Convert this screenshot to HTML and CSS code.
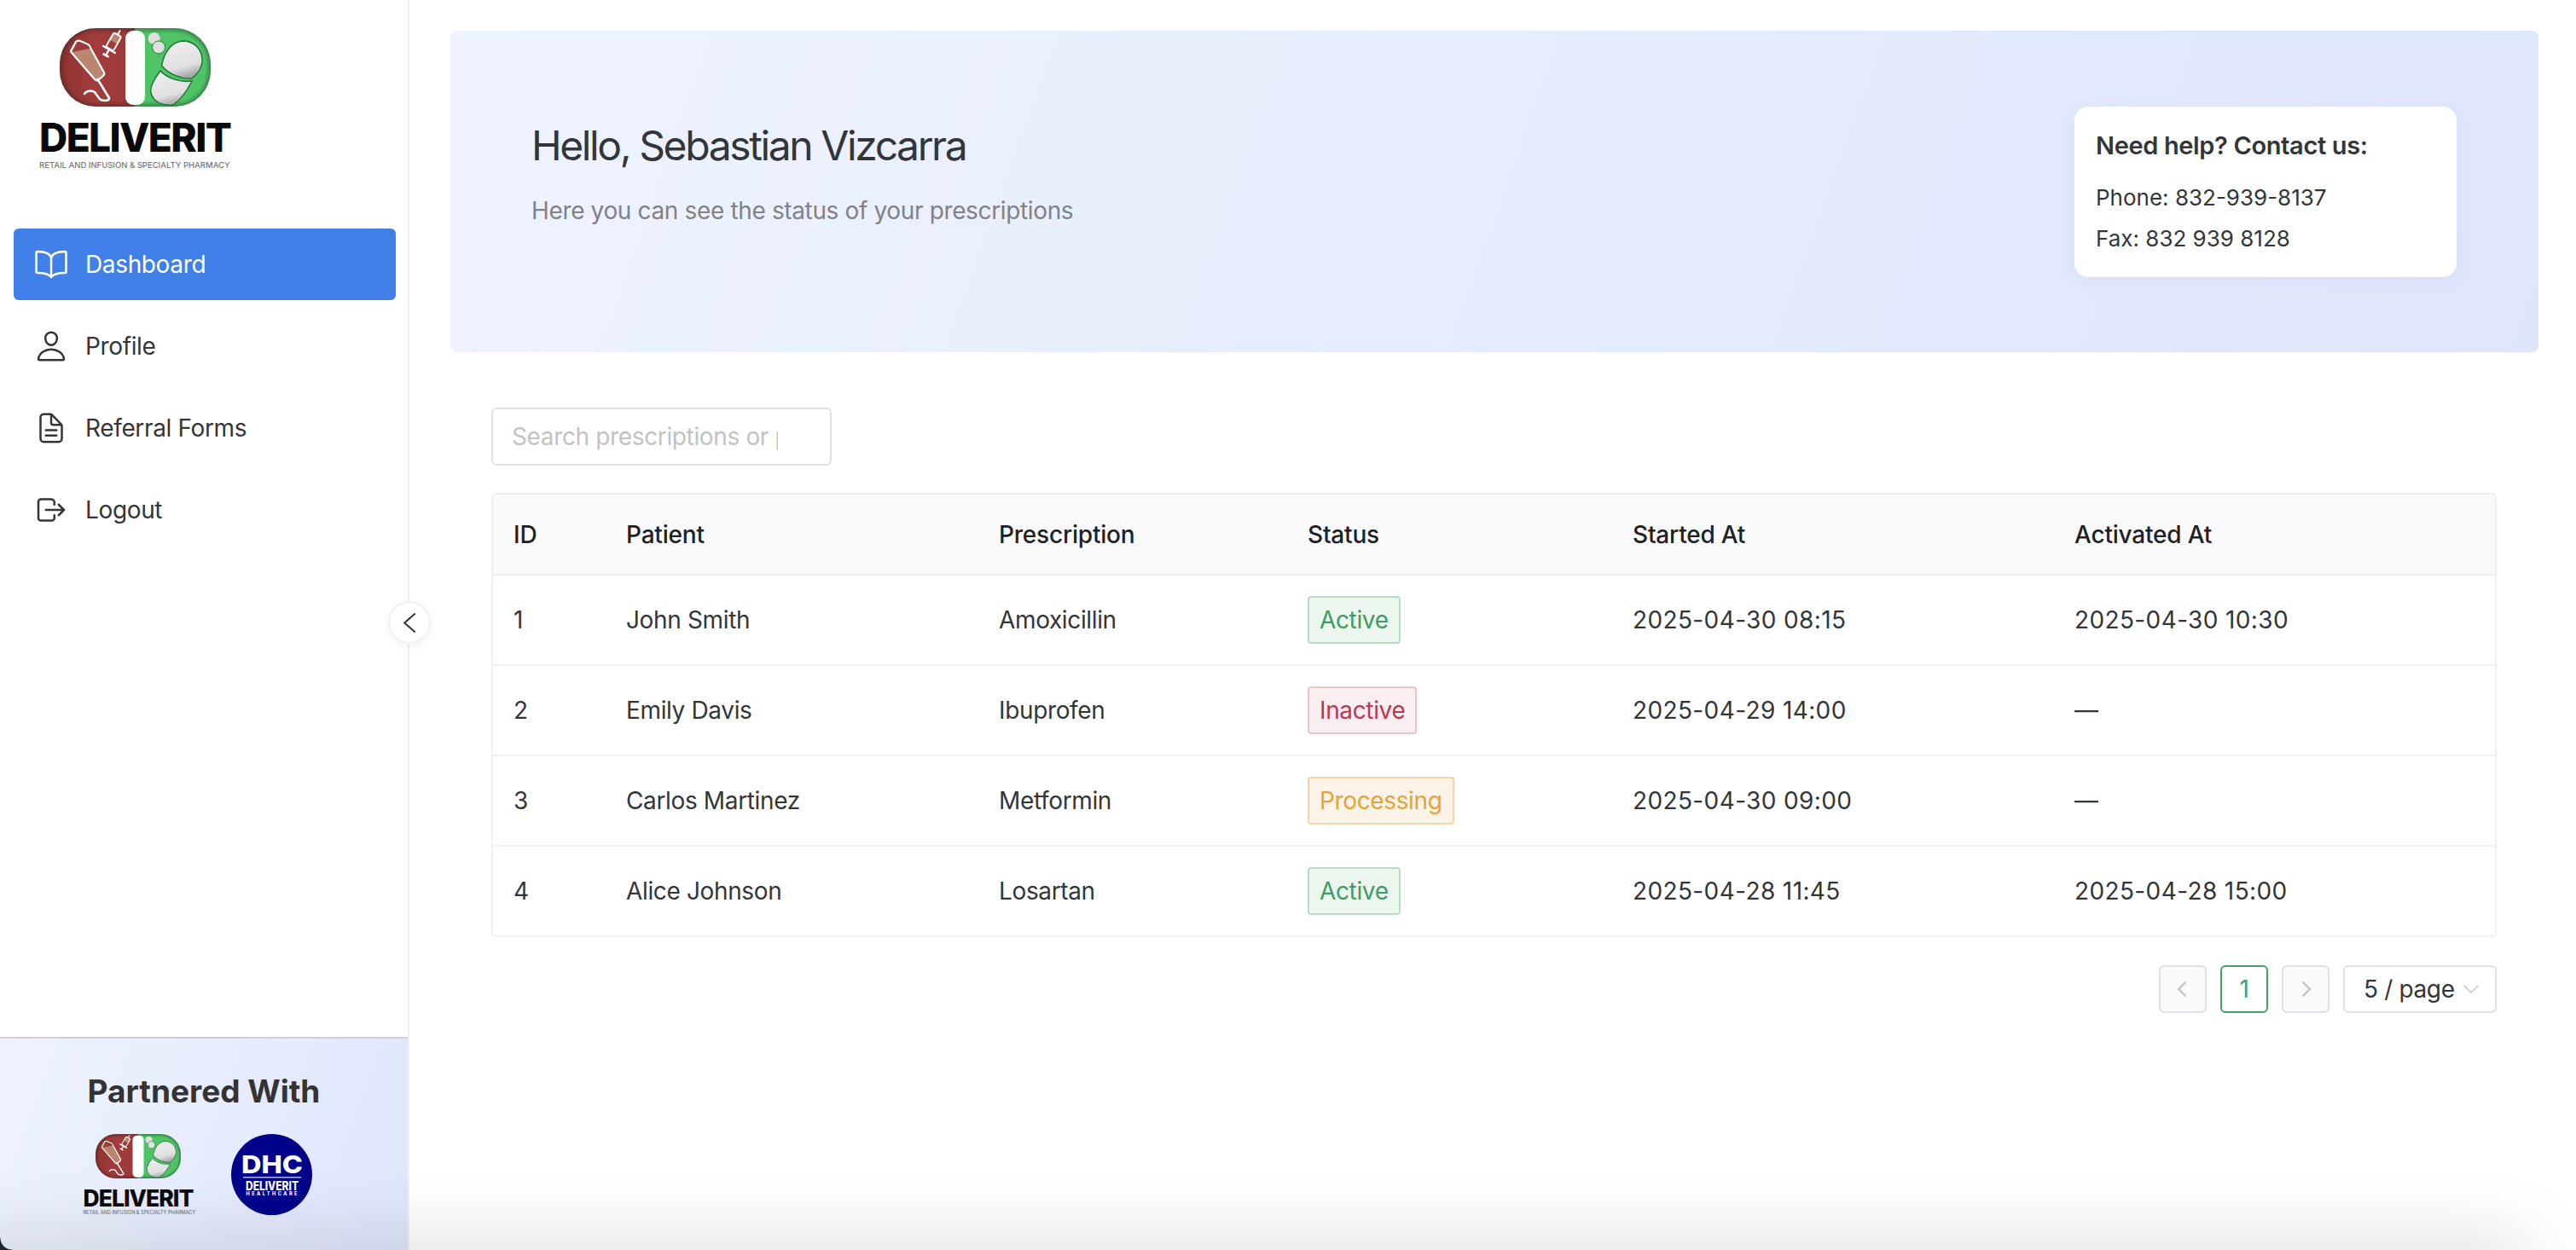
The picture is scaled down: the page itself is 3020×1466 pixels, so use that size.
FILE: index.html
```html
<!DOCTYPE html>
<html lang="en">
<head>
<meta charset="utf-8">
<title>Deliverit Dashboard</title>
<link rel="stylesheet" href="styles.css">
</head>
<body>
<svg class="defs" width="0" height="0" aria-hidden="true">
  <defs>
    <linearGradient id="redFill" x1="0" y1="0" x2="1" y2="0">
      <stop offset="0" stop-color="#8f3232"/><stop offset="0.5" stop-color="#a33c3c"/><stop offset="1" stop-color="#9a3838"/>
    </linearGradient>
    <linearGradient id="capsFill" x1="0.2" y1="0" x2="0.5" y2="1">
      <stop offset="0" stop-color="#efefef"/><stop offset="0.72" stop-color="#e0e0e0"/><stop offset="1" stop-color="#a4a4a4"/>
    </linearGradient>
    <clipPath id="pillClip"><rect width="177" height="92" rx="42"/></clipPath>
    <filter id="soft" x="-20%" y="-20%" width="140%" height="140%"><feGaussianBlur stdDeviation="2.2"/></filter>
    <symbol id="pill" viewBox="0 0 177 92">
      <g clip-path="url(#pillClip)">
        <rect width="88.5" height="92" fill="url(#redFill)"/>
        <rect x="88.5" width="88.5" height="92" fill="#4fc467"/>
        <rect x="0.5" y="0.5" width="176" height="91" rx="41.5" fill="none" stroke="#1d2a20" stroke-opacity="0.55" stroke-width="4" filter="url(#soft)"/>
      </g>
      <rect x="77" y="3" width="23" height="87" rx="9" fill="#fff"/>
      <path d="M13 27L19 16Q21 14 24 15L33 19Q35 20 36 23L52 52Q53 54 51 56L45 61Q43 62 41 60L15 30Q13 28 13 27z" fill="#bb8570" stroke="#fff" stroke-width="2.2" stroke-linejoin="round"/>
      <path d="M14.5 28L20 17Q21.500 15.500 24 16.300L32.500 20Q34.500 21 35.500 24z" fill="#9c3b3b"/>
      <path d="M44 60L47 64L58 82Q58 85 53 85Q48 85 46 82L41 75Q38 73 33 74Q30 75 29 77" fill="none" stroke="#fff" stroke-width="2.6" stroke-linecap="round" stroke-linejoin="round"/>
      <g transform="rotate(30 62 18)">
        <path d="M62 0v6" stroke="#fff" stroke-width="2"/>
        <rect x="57" y="6" width="10" height="19" rx="2.500" fill="#bb8570" stroke="#fff" stroke-width="2"/>
        <rect x="58" y="16" width="8" height="8" fill="#9c3b3b"/>
        <path d="M53 26h18M62 26v7M58 34h8" stroke="#fff" stroke-width="2.400"/>
      </g>
      <circle cx="110.700" cy="12" r="7" fill="#dedede"/>
      <circle cx="116" cy="22.500" r="7.500" fill="#e0e0e0" stroke="#1f7a35" stroke-width="1"/>
      <path d="M119.500 44C122 30 130 15 146 15C158 16 168 25 167 40C166 48 160 55 155 59C142 60 128 54 119.500 44z" fill="url(#capsFill)" stroke="#1c7332" stroke-width="1.400"/>
      <path d="M118 50C126 59 142 64 155 62C150 72 142 84 133 90C122 91 110 88 107 76C105 68 112 58 118 50z" fill="url(#capsFill)" stroke="#1c7332" stroke-width="1.400"/>
    </symbol>
  </defs>
</svg>

<aside class="sidebar">
  <div class="brand">
    <svg class="brand-pill"><use href="#pill"/></svg>
    <div class="brand-name">DELIVERIT</div>
    <div class="brand-sub">RETAIL AND INFUSION &amp; SPECIALTY PHARMACY</div>
  </div>

  <nav class="menu">
    <a class="menu-item active">
      <svg class="menu-icon" viewBox="0 0 512 512"><path d="M256 160c16-63.16 76.43-95.41 208-96a15.94 15.94 0 0 1 16 16v288a16 16 0 0 1-16 16c-128 0-177.45 25.81-208 64c-30.37-38-80-64-208-64c-9.88 0-16-8.05-16-17.93V80a15.94 15.94 0 0 1 16-16c131.57.59 192 32.84 208 96z"/><path d="M256 160v288"/></svg>
      <span>Dashboard</span>
    </a>
    <a class="menu-item">
      <svg class="menu-icon" viewBox="0 0 512 512"><path d="M344 144c-3.92 52.87-44 96-88 96s-84.15-43.12-88-96c-4-55 35-96 88-96s92 42 88 96z"/><path d="M256 304c-87 0-175.3 48-191.64 138.6C62.39 453.52 68.57 464 80 464h352c11.44 0 17.62-10.48 15.65-21.4C431.3 352 343 304 256 304z"/></svg>
      <span>Profile</span>
    </a>
    <a class="menu-item">
      <svg class="menu-icon" viewBox="0 0 512 512"><path d="M416 221.25V416a48 48 0 0 1-48 48H144a48 48 0 0 1-48-48V96a48 48 0 0 1 48-48h98.75a32 32 0 0 1 22.62 9.37l141.26 141.26a32 32 0 0 1 9.37 22.62z"/><path d="M256 56v120a32 32 0 0 0 32 32h120"/><path d="M176 288h160"/><path d="M176 368h160"/></svg>
      <span>Referral Forms</span>
    </a>
    <a class="menu-item">
      <svg class="menu-icon" viewBox="0 0 512 512"><path d="M304 336v40a40 40 0 0 1-40 40H104a40 40 0 0 1-40-40V136a40 40 0 0 1 40-40h152c22.09 0 48 17.91 48 40v40"/><path d="M368 336l80-80l-80-80"/><path d="M176 256h256"/></svg>
      <span>Logout</span>
    </a>
  </nav>

  <button class="collapse" aria-label="Collapse sidebar">
    <svg viewBox="0 0 24 24"><path d="M18 1.500L6 12l12 10.500"/></svg>
  </button>

  <section class="partner">
    <h3 class="partner-title">Partnered With</h3>
    <div class="partner-logos">
      <div class="mini-brand">
        <svg class="mini-pill"><use href="#pill"/></svg>
        <div class="mini-name">DELIVERIT</div>
        <div class="mini-sub">RETAIL AND INFUSION &amp; SPECIALTY PHARMACY</div>
      </div>
      <svg class="dhc" viewBox="0 0 95 95">
        <circle cx="47.500" cy="47.500" r="47.500" fill="#00008b"/>
        <text class="dhc-main" x="12" y="46" textLength="72" lengthAdjust="spacingAndGlyphs">DHC</text>
        <rect x="14" y="50" width="68" height="1.600" fill="#a9a9e0"/>
        <text class="dhc-name" x="17" y="66" textLength="62" lengthAdjust="spacingAndGlyphs">DELIVERIT</text>
        <text class="dhc-sub" x="17.500" y="72" textLength="60" lengthAdjust="spacing">HEALTHCARE</text>
      </svg>
    </div>
  </section>
</aside>

<main class="main">
  <header class="hero">
    <div class="hero-text">
      <h1 class="hero-title">Hello, Sebastian Vizcarra</h1>
      <p class="hero-sub">Here you can see the status of your prescriptions</p>
    </div>
    <div class="help-card">
      <h4 class="help-title">Need help? Contact us:</h4>
      <p class="help-line">Phone: 832-939-8137</p>
      <p class="help-line">Fax: 832 939 8128</p>
    </div>
  </header>

  <section class="content">
    <input class="search" type="text" placeholder="Search prescriptions or patients">

    <div class="table-wrap">
      <table class="table">
        <colgroup>
          <col class="c-id"><col class="c-patient"><col class="c-rx"><col class="c-status"><col class="c-start"><col>
        </colgroup>
        <thead>
          <tr><th>ID</th><th>Patient</th><th>Prescription</th><th>Status</th><th>Started At</th><th>Activated At</th></tr>
        </thead>
        <tbody>
          <tr><td>1</td><td>John Smith</td><td>Amoxicillin</td><td><span class="tag tag-green">Active</span></td><td class="num">2025-04-30 08:15</td><td class="num">2025-04-30 10:30</td></tr>
          <tr><td>2</td><td>Emily Davis</td><td>Ibuprofen</td><td><span class="tag tag-red">Inactive</span></td><td class="num">2025-04-29 14:00</td><td>—</td></tr>
          <tr><td>3</td><td>Carlos Martinez</td><td>Metformin</td><td><span class="tag tag-orange">Processing</span></td><td class="num">2025-04-30 09:00</td><td>—</td></tr>
          <tr><td>4</td><td>Alice Johnson</td><td>Losartan</td><td><span class="tag tag-green">Active</span></td><td class="num">2025-04-28 11:45</td><td class="num">2025-04-28 15:00</td></tr>
        </tbody>
      </table>
    </div>

    <div class="pagination">
      <span class="page disabled"><svg viewBox="0 0 24 24"><path d="M15 4.500L7.500 12l7.500 7.500"/></svg></span>
      <span class="page current">1</span>
      <span class="page disabled"><svg viewBox="0 0 24 24"><path d="M9 4.500l7.500 7.500L9 19.500"/></svg></span>
      <span class="page-size">5 / page<svg viewBox="0 0 24 24"><path d="M2 7l10 10L22 7"/></svg></span>
    </div>
  </section>
</main>

<div class="bottom-shadow"></div>
<div class="window-corner"></div>
</body>
</html>
```

FILE: styles.css
```css
* { box-sizing: border-box; }

html, body {
  margin: 0;
  height: 100%;
}

body {
  position: relative;
  display: flex;
  overflow: hidden;
  background: #fff;
  color: #333639;
  font-family: Inter, "Liberation Sans", sans-serif;
  font-size: 28px;
  letter-spacing: -0.36px;
}

.defs { position: absolute; }

/* Sidebar */
.sidebar {
  position: relative;
  display: flex;
  flex-direction: column;
  flex: 0 0 480px;
  height: 100vh;
  border-right: 2px solid #efeff5;
  background: #fff;
}

.brand {
  height: 268px;
  padding: 33px 0 0 46px;
}

.brand-pill {
  display: block;
  width: 177px;
  height: 92px;
  margin-left: 24px;
}

.brand-name {
  margin-top: 13px;
  color: #0a0a0a;
  font-size: 46px;
  font-weight: 800;
  line-height: 46px;
  letter-spacing: -1.6px;
}

.brand-sub {
  margin-top: 4px;
  color: #777;
  font-size: 9.5px;
  font-weight: 500;
  line-height: 12px;
  letter-spacing: 0;
  white-space: nowrap;
}

.menu {
  display: flex;
  flex-direction: column;
  flex: 1;
  gap: 12px;
  padding: 0 14px 0 16px;
}

.menu-item {
  display: flex;
  align-items: center;
  height: 84px;
  padding-left: 24px;
  border-radius: 6px;
  color: #333639;
}

.menu-item.active {
  background: #4080e8;
  color: #fff;
}

.menu-icon {
  flex: none;
  width: 40px;
  height: 40px;
  margin-right: 20px;
  fill: none;
  stroke: currentColor;
  stroke-width: 32;
  stroke-linecap: round;
  stroke-linejoin: round;
}

.collapse {
  position: absolute;
  top: 705px;
  right: -27px;
  z-index: 2;
  display: flex;
  align-items: center;
  justify-content: center;
  width: 50px;
  height: 50px;
  padding: 0;
  border: 2px solid #f0f0f5;
  border-radius: 50%;
  background: #fff;
  box-shadow: 0 4px 12px rgba(0, 0, 0, 0.05);
}

.collapse svg {
  width: 25px;
  height: 25px;
  fill: none;
  stroke: #333639;
  stroke-width: 2;
}

.partner {
  flex: 0 0 250px;
  border-top: 2px solid #cfcfd2;
  background: linear-gradient(110deg, #eff3ff, #dfe6fb);
  text-align: center;
}

.partner-title {
  margin: 40px 0 0;
  color: #333;
  font-size: 37px;
  font-weight: 700;
  line-height: 44px;
  letter-spacing: 0;
}

.partner-logos {
  display: flex;
  justify-content: center;
  align-items: flex-start;
  gap: 43px;
  margin-top: 28px;
  padding-right: 15px;
}

.mini-brand {
  width: 130px;
  text-align: left;
}

.mini-pill {
  display: block;
  width: 102px;
  height: 52px;
  margin-left: 13px;
}

.mini-name {
  margin-top: 10px;
  color: #0a0a0a;
  font-size: 26.5px;
  font-weight: 800;
  line-height: 26px;
  letter-spacing: -0.95px;
}

.mini-sub {
  margin-top: 0;
  color: #777;
  font-size: 5.6px;
  font-weight: 500;
  line-height: 8px;
  letter-spacing: 0;
  white-space: nowrap;
}

.dhc {
  flex: none;
  width: 95px;
  height: 95px;
}

.dhc text {
  fill: #fff;
  font-family: Inter, "Liberation Sans", sans-serif;
  font-weight: 800;
  letter-spacing: 0;
}

.dhc-main { font-size: 29px; }
.dhc-name { font-size: 14px; font-weight: 600; }
.dhc-sub { font-size: 5.6px; }

/* Main */
.main {
  flex: 1;
  min-width: 0;
  padding: 36px 44px 0 48px;
}

.hero {
  display: flex;
  align-items: center;
  justify-content: space-between;
  height: 377px;
  padding: 0 96px 0 95px;
  border-radius: 8px;
  background: linear-gradient(110deg, #eff3ff, #dfe6fb);
}

.hero-text { margin-bottom: 44px; }

.hero-title {
  margin: 0;
  color: #333639;
  font-size: 48px;
  font-weight: 400;
  line-height: 60px;
  letter-spacing: -2.4px;
}

.hero-sub {
  margin: 28px 0 0;
  color: #808287;
  font-size: 28px;
  line-height: 36px;
}

.help-card {
  width: 448px;
  height: 200px;
  padding: 28px 25px 0;
  border-radius: 16px;
  background: #fff;
  box-shadow: 0 4px 20px rgba(90, 110, 190, 0.08);
}

.help-title {
  margin: 0 0 19px;
  color: #333639;
  font-size: 29px;
  font-weight: 600;
  line-height: 36px;
}

.help-line {
  margin: 0;
  font-size: 26px;
  line-height: 48px;
  letter-spacing: 0;
}

.content {
  padding: 65px 0 0 0;
  margin: 0 49px 0 48px;
}

.search {
  display: block;
  width: 399px;
  height: 68px;
  padding: 0 61px 0 22px;
  border: 2px solid #e0e0e6;
  border-radius: 6px;
  outline: none;
  background: #fff;
  color: #333639;
  font-family: inherit;
  font-size: 28px;
  letter-spacing: inherit;
}

.search::placeholder {
  color: #c2c2c4;
  opacity: 1;
}

.table-wrap {
  margin-top: 32px;
  border: 2px solid #efeff5;
  border-radius: 6px;
  overflow: hidden;
}

.table {
  width: 100%;
  border-collapse: separate;
  border-spacing: 0;
  table-layout: fixed;
}

.c-id { width: 132px; }
.c-patient { width: 437px; }
.c-rx { width: 362px; }
.c-status { width: 381px; }
.c-start { width: 518px; }

.table th,
.table td {
  padding: 0 24px;
  text-align: left;
  border-bottom: 2px solid #efeff5;
}

.table th {
  height: 95px;
  background: #fafafc;
  color: #1f2225;
  font-weight: 500;
  letter-spacing: -0.2px;
}

.table td { height: 106px; }

.table td.num { letter-spacing: 0.38px; }

.table tbody tr:last-child td {
  height: 104px;
  border-bottom: 0;
}

.tag {
  display: inline-flex;
  align-items: center;
  height: 56px;
  padding: 0 12px;
  border: 2px solid;
  border-radius: 4px;
  vertical-align: middle;
}

.tag-green { background: #edf5ef; border-color: #b9dbc5; color: #3f9c5f; }
.tag-red { background: #f9eff1; border-color: #eec3ca; color: #c03650; }
.tag-orange { background: #fbf3e8; border-color: #f5d5a3; color: #e6a23c; }

.pagination {
  display: flex;
  justify-content: flex-end;
  gap: 16px;
  margin-top: 33px;
}

.page {
  display: flex;
  align-items: center;
  justify-content: center;
  width: 56px;
  height: 56px;
  border: 2px solid #e0e0e6;
  border-radius: 6px;
}

.page svg {
  width: 26px;
  height: 26px;
  fill: none;
  stroke: #c2c2c4;
  stroke-width: 2;
}

.page.disabled { background: #fafafc; }

.page.current {
  border-color: #46a062;
  color: #46a062;
}

.page-size {
  display: flex;
  align-items: center;
  justify-content: space-between;
  width: 180px;
  height: 56px;
  padding: 0 18px 0 22px;
  border: 2px solid #e0e0e6;
  border-radius: 6px;
}

.page-size svg {
  width: 20px;
  height: 20px;
  fill: none;
  stroke: #c2c2c4;
  stroke-width: 1.6;
}

/* Screenshot window edge */
.bottom-shadow {
  position: absolute;
  left: -100px;
  right: 60px;
  bottom: -40px;
  height: 40px;
  box-shadow: 0 0 90px rgba(0, 0, 0, 0.22);
  pointer-events: none;
}

.window-corner {
  position: absolute;
  left: 0;
  bottom: 0;
  width: 14px;
  height: 14px;
  background: radial-gradient(circle at 100% 0, transparent 13px, #1b2a26 14px);
  pointer-events: none;
}
```
